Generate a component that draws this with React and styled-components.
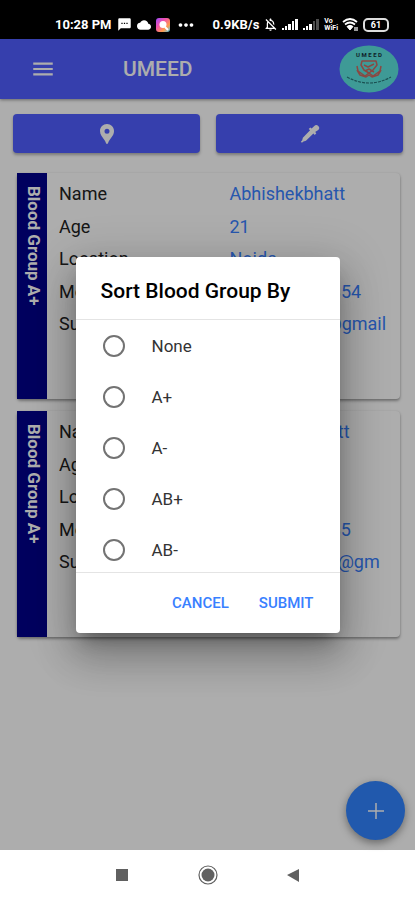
import React, { useState } from "react";
import styled, { createGlobalStyle } from "styled-components";
import {
  MdMenu,
  MdLocationPin,
  MdSms,
  MdCloud,
  MdMoreHoriz,
  MdOutlineNotificationsOff,
} from "react-icons/md";

const people = [
  {
    id: 1,
    group: "Blood Group A+",
    rows: [
      ["Name", "Abhishekbhatt"],
      ["Age", "21"],
      ["Location", "Noida"],
      ["Mobile", "+917906412354"],
      ["Support", "abhibhatt21@gmail"],
    ],
  },
  {
    id: 2,
    group: "Blood Group A+",
    rows: [
      ["Name", "Abhishek bhatt"],
      ["Age", "21"],
      ["Location", "Noida"],
      ["Mobile", "917906412335"],
      ["Support", "abhishekar21@gm"],
    ],
  },
];

const options = ["None", "A+", "A-", "AB+", "AB-"];

const Signal = ({ weak }) => (
  <svg width="17" height="13" viewBox="0 0 17 13" fill="#fff" aria-hidden="true">
    <rect x="0" y="10" width="2" height="2" />
    <rect x="3" y="8" width="2" height="4" />
    <rect x="6" y="6" width="3" height="6" />
    <rect x="10" y="3" width="2" height="9" opacity={weak ? 0.3 : 1} />
    <rect x="13" y="1" width="3" height="11" opacity={weak ? 0.3 : 1} />
  </svg>
);

const Wifi = () => (
  <svg width="17" height="15" viewBox="0 0 17 15" fill="none" stroke="#fff" aria-hidden="true">
    <path d="M1 5Q8 -1 15 5" strokeWidth="1.8" />
    <path d="M3 7.5Q8 3.5 13 7.5" strokeWidth="1.8" />
    <path d="M5 9.5Q8 7 11 9.5L8 13Z" fill="#fff" strokeWidth="1" />
    <path d="M13 10v4M15 14v-4" strokeWidth="1.2" />
  </svg>
);

const Dropper = () => (
  <svg width="22" height="22" viewBox="0 0 24 24" fill="currentColor" aria-hidden="true">
    <path d="M21 3.200a3 3 0 0 0-4.300 0l-2.900 2.900-1.500-1.300-1.700 1.700 1.500 1.500-7.900 8.100-.700 2.600-1.500 1.700 1.200 1.200 1.700-1.500 2.700-.700 8.100-7.900 1.500 1.500 1.700-1.700-1.300-1.500L21 7.500a3 3 0 0 0 0-4.300z" />
  </svg>
);

const Logo = () => (
  <LogoArt viewBox="0 0 60 48" role="img" aria-label="Umeed">
    <ellipse cx="30" cy="24" rx="29.5" ry="23.5" fill="#5ce4de" />
    <text x="30" y="12" textAnchor="middle" fontSize="6" fontWeight="700" fill="#16323c">
      U M E E D
    </text>
    <g fill="none" stroke="#cc6a62" strokeWidth="1.5" strokeLinejoin="round">
      <path d="M23 16h14l1 4-4 5-4 3-5-3-3-5z" />
      <path d="M25 20l4 2 6-3" />
      <path d="M18 21l1 5 7 5 4-3 4 3 7-5 1-5M18 25l3 5 6 2 3-2 3 2 6-2 3-5" />
      <path d="M26 26l4-2 5 3" />
    </g>
    <path d="M8 32Q30 44 52 32" fill="none" stroke="#28777a" strokeWidth="1.2" strokeDasharray="3 1" />
  </LogoArt>
);

const App = () => {
  const [selected, setSelected] = useState("");
  const [open, setOpen] = useState(true);

  const submit = (e) => {
    e.preventDefault();
    setOpen(false);
  };

  return (
    <Container>
      <GlobalStyle />
      <StatusBar>
        <StatusGroup>
          <span>10:28 PM</span>
          <MdSms size={15} />
          <MdCloud size={14} />
          <Gallery viewBox="0 0 14 14" aria-hidden="true">
            <defs>
              <linearGradient id="gallery" x1="0" y1="0" x2="1" y2="1">
                <stop offset="0" stopColor="#9a4dff" />
                <stop offset="0.35" stopColor="#f04fb0" />
                <stop offset="0.7" stopColor="#ff9a4a" />
                <stop offset="1" stopColor="#46c8f0" />
              </linearGradient>
            </defs>
            <rect width="14" height="14" rx="3" fill="url(#gallery)" />
            <circle cx="7" cy="6.5" r="3.5" fill="#fff" />
            <path d="M9 9l3 3" stroke="#fff" strokeWidth="2" />
          </Gallery>
          <MdMoreHoriz size={22} />
        </StatusGroup>
        <StatusGroup $tight>
          <span>0.9KB/s</span>
          <MdOutlineNotificationsOff size={15} />
          <Signal />
          <Signal weak />
          <VoWifi>
            <span>Vo</span>
            <span>WiFi</span>
          </VoWifi>
          <Wifi />
          <Battery>61</Battery>
        </StatusGroup>
      </StatusBar>

      <Screen>
        <Toolbar>
          <MenuButton type="button" aria-label="Menu">
            <MdMenu size={26} />
          </MenuButton>
          <Title>UMEED</Title>
          <Logo />
        </Toolbar>

        <Filters>
          <FilterButton type="button" aria-label="Location">
            <MdLocationPin size={24} />
          </FilterButton>
          <FilterButton type="button" aria-label="Blood group">
            <Dropper />
          </FilterButton>
        </Filters>

        <Cards>
          {people.map((person) => (
            <Card key={person.id}>
              <Side>{person.group}</Side>
              <Details>
                {person.rows.map(([label, value]) => (
                  <Row key={label}>
                    <dt>{label}</dt>
                    <dd>{value}</dd>
                  </Row>
                ))}
              </Details>
            </Card>
          ))}
        </Cards>

        <Fab type="button" aria-label="Add">
          <svg width="16" height="16" viewBox="0 0 16 16" stroke="#fff" strokeWidth="1.5" aria-hidden="true">
            <path d="M8 0v16M0 8h16" />
          </svg>
        </Fab>

        {open && (
          <Backdrop>
            <Dialog role="dialog" aria-labelledby="sort-title" onSubmit={submit}>
              <DialogTitle id="sort-title">Sort Blood Group By</DialogTitle>
              <OptionList>
                {options.map((option) => (
                  <Option key={option}>
                    <Radio
                      type="radio"
                      name="group"
                      value={option}
                      checked={selected === option}
                      onChange={() => setSelected(option)}
                    />
                    {option}
                  </Option>
                ))}
              </OptionList>
              <Actions>
                <TextButton type="button" onClick={() => setOpen(false)}>
                  CANCEL
                </TextButton>
                <TextButton type="submit">SUBMIT</TextButton>
              </Actions>
            </Dialog>
          </Backdrop>
        )}
      </Screen>

      <NavBar>
        <NavButton type="button" aria-label="Recent apps">
          <svg width="20" height="20" viewBox="0 0 20 20" fill="#606060">
            <rect x="4" y="4" width="12" height="12" />
          </svg>
        </NavButton>
        <NavButton type="button" aria-label="Home">
          <svg width="20" height="20" viewBox="0 0 20 20" fill="#606060">
            <circle cx="10" cy="10" r="6.5" />
            <circle cx="10" cy="10" r="9" fill="none" stroke="#606060" strokeWidth="1.2" />
          </svg>
        </NavButton>
        <NavButton type="button" aria-label="Back">
          <svg width="20" height="20" viewBox="0 0 20 20" fill="#606060">
            <path d="M3 10L15 4v13z" />
          </svg>
        </NavButton>
      </NavBar>
    </Container>
  );
};

export default App;

const GlobalStyle = createGlobalStyle`
  * {
    box-sizing: border-box;
  }
  body {
    margin: 0;
    font-family: Roboto, "Liberation Sans", sans-serif;
  }
  button {
    font-family: inherit;
    border: none;
    padding: 0;
    cursor: pointer;
  }
`;

const Container = styled.div`
  min-height: 100vh;
  display: flex;
  flex-direction: column;
  background-color: #fff;
`;

const StatusBar = styled.header`
  display: flex;
  justify-content: space-between;
  height: 39px;
  padding: 10px 26px 0 55px;
  background-color: #000;
  color: #fff;
  font-size: 13px;
  font-weight: 700;
`;

const StatusGroup = styled.div`
  display: flex;
  align-items: center;
  gap: ${(props) => (props.$tight ? "4px" : "5px")};
`;

const Gallery = styled.svg`
  width: 14px;
  height: 14px;
`;

const VoWifi = styled.span`
  display: flex;
  flex-direction: column;
  font-size: 7px;
  line-height: 7px;
`;

const Battery = styled.span`
  width: 26px;
  height: 14px;
  border: 2px solid #ddd;
  border-radius: 5px;
  font-size: 9px;
  line-height: 10px;
  text-align: center;
`;

const Screen = styled.main`
  position: relative;
  flex: 1;
`;

const Toolbar = styled.div`
  display: flex;
  align-items: center;
  height: 60px;
  padding: 0 16px 0 30px;
  background-color: #505eff;
  color: #fff;
  box-shadow: 0 1px 3px rgba(0, 0, 0, 0.4);
`;

const MenuButton = styled.button`
  display: flex;
  background: none;
  color: inherit;
`;

const Title = styled.h1`
  flex: 1;
  margin: 0 0 0 67px;
  font-size: 21px;
  font-weight: 500;
`;

const LogoArt = styled.svg`
  width: 60px;
  height: 48px;
`;

const Filters = styled.div`
  display: grid;
  grid-template-columns: 1fr 1fr;
  gap: 16px;
  padding: 15px 12px 20px 13px;
`;

const FilterButton = styled.button`
  display: flex;
  align-items: center;
  justify-content: center;
  height: 39px;
  border-radius: 4px;
  background-color: #505eff;
  color: #fff;
  box-shadow: 0 2px 3px rgba(0, 0, 0, 0.3);
`;

const Cards = styled.section`
  display: grid;
  gap: 12px;
  padding: 0 15px 24px 17px;
`;

const Card = styled.article`
  display: flex;
  min-height: 226px;
  border-radius: 4px;
  box-shadow: 0 2px 3px rgba(0, 0, 0, 0.35), 0 0 2px rgba(0, 0, 0, 0.1);
`;

const Side = styled.div`
  width: 30px;
  padding-top: 13px;
  line-height: 26px;
  writing-mode: vertical-rl;
  background-color: #00008b;
  color: #fff;
  font-size: 17px;
  font-weight: 700;
`;

const Details = styled.dl`
  flex: 1;
  display: flex;
  flex-direction: column;
  justify-content: space-between;
  height: 154px;
  margin: 9px 0 0;
  padding-left: 12px;
  font-size: 18px;
  line-height: 24px;
`;

const Row = styled.div`
  display: grid;
  grid-template-columns: 1fr 1fr;
  dt {
    color: #222;
  }
  dd {
    margin: 0;
    color: #3880ff;
    white-space: nowrap;
  }
`;

const Fab = styled.button`
  position: absolute;
  right: 10px;
  bottom: 10px;
  display: flex;
  align-items: center;
  justify-content: center;
  width: 59px;
  height: 59px;
  border-radius: 50%;
  background-color: #3184ff;
  box-shadow: 0 3px 8px rgba(0, 0, 0, 0.4);
`;

const Backdrop = styled.div`
  position: absolute;
  inset: 0;
  display: grid;
  place-items: center;
  background-color: rgba(0, 0, 0, 0.32);
`;

const Dialog = styled.form`
  width: 264px;
  max-width: calc(100% - 48px);
  border-radius: 4px;
  background-color: #fff;
  overflow: hidden;
  box-shadow: 0 12px 16px -7px rgba(0, 0, 0, 0.3), 0 24px 38px 3px rgba(0, 0, 0, 0.2),
    0 9px 46px 8px rgba(0, 0, 0, 0.15);
`;

const DialogTitle = styled.h2`
  margin: 0;
  padding: 20px 24px 14px 25px;
  font-size: 21px;
  font-weight: 500;
  line-height: 28px;
  color: #000;
  border-bottom: 1px solid #e4e4e4;
`;

const OptionList = styled.div`
  height: 252px;
  padding-top: 1px;
  overflow-y: auto;
  scrollbar-width: none;
`;

const Option = styled.label`
  display: flex;
  align-items: center;
  gap: 27px;
  height: 51px;
  padding-left: 27px;
  font-size: 17px;
  color: #333;
`;

const Radio = styled.input`
  appearance: none;
  width: 22px;
  height: 22px;
  margin: 0;
  border: 2px solid #737373;
  border-radius: 50%;
  &:checked {
    border-color: #3880ff;
    box-shadow: inset 0 0 0 4px #fff;
    background-color: #3880ff;
  }
`;

const Actions = styled.div`
  display: flex;
  justify-content: flex-end;
  gap: 30px;
  padding: 15px 26px 14px;
  border-top: 1px solid #e4e4e4;
`;

const TextButton = styled.button`
  height: 31px;
  background: none;
  color: #3880ff;
  font-size: 15px;
  font-weight: 500;
`;

const NavBar = styled.nav`
  display: flex;
  justify-content: center;
  align-items: center;
  gap: 66px;
  height: 50px;
  background-color: #fff;
`;

const NavButton = styled.button`
  display: flex;
  background: none;
`;
